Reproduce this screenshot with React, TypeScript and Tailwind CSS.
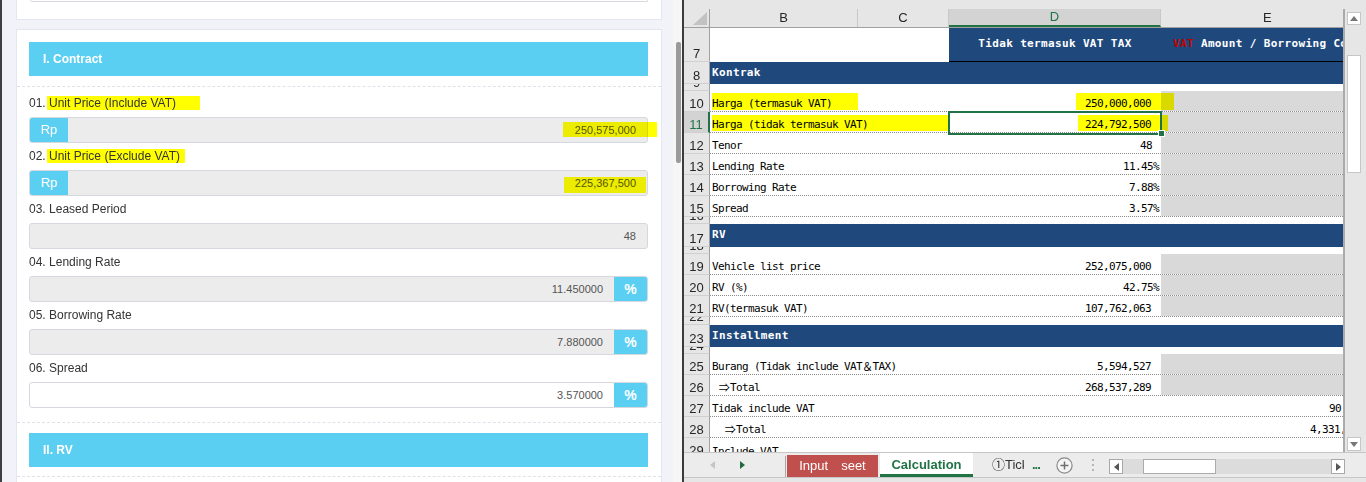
import React from "react";

const sans = "font-['Liberation_Sans',Arial,sans-serif]";
const mono = "font-['DejaVu_Sans_Mono','Noto_Sans_CJK_JP',monospace]";
const wide = "inline-block w-[12px] text-center font-['Noto_Sans_CJK_JP',sans-serif]";

interface FieldProps {
  no: string;
  label: string;
  labelHl?: string;
  value: string;
  prefix?: boolean;
  suffix?: boolean;
  editable?: boolean;
  valueHl?: string;
}

const Field: React.FC<FieldProps> = ({ no, label, labelHl, value, prefix, suffix, editable, valueHl }) => (
  <div>
    <div className="h-[16px] text-[12px] leading-[19px] text-[#333]">
      {no}{" "}
      {labelHl ? <span className={`-ml-[2px] bg-[#ffff00] pl-[2px] ${labelHl}`}>{label}</span> : label}
    </div>
    <div
      className={`relative mt-[7px] flex h-[26px] rounded-[3px] border border-[#d5d8df] ${
        editable ? "bg-white" : "bg-[#ececec]"
      }`}
    >
      {prefix && (
        <div className="flex w-[38px] items-center justify-center rounded-l-[2px] bg-[#5bcff2] text-[13px] text-white">
          Rp
        </div>
      )}
      <div className="flex flex-1 items-center justify-end pr-[11px] text-[11px] text-[#555]">{value}</div>
      {suffix && (
        <div className="flex w-[33px] items-center justify-center rounded-r-[2px] bg-[#5bcff2] text-[14px] font-bold text-white">
          %
        </div>
      )}
      {valueHl && <div className={`pointer-events-none absolute bg-[#ffff00] mix-blend-multiply ${valueHl}`} />}
    </div>
  </div>
);

const SectionHead: React.FC<{ title: string; pad: string }> = ({ title, pad }) => (
  <div className={`border-b border-dashed border-[#dfe2e8] px-[12px] pr-[13px] ${pad}`}>
    <div className="flex h-[34px] items-center bg-[#5bcff2] pl-[14px] text-[12px] font-bold text-white">{title}</div>
  </div>
);

const FormPanel: React.FC = () => (
  <div className={`flex h-[482px] w-[682px] shrink-0 border-l-2 border-[#3f3f3f] bg-[#f1f3f8] ${sans}`}>
    <div className="flex-1 overflow-hidden pl-[14px] pr-[11px]">
      <div className="h-[20px] border-x border-b border-[#e4e7ed] bg-white">
        <div className="mx-[13px] h-[2px] rounded-b-[3px] border-x border-b border-[#d5d8df]" />
      </div>
      <div className="mt-[9px] border border-[#e4e7ed] bg-white">
        <SectionHead title="I. Contract" pad="pt-[12px] pb-[10px]" />
        <div className="flex flex-col gap-[4px] border-b border-dashed border-[#dfe2e8] pb-[14px] pl-[12px] pr-[13px] pt-[7px]">
          <Field
            no="01."
            label="Unit Price (Include VAT)"
            labelHl="pr-[24px]"
            value="250,575,000"
            prefix
            valueHl="right-[-10px] top-[4px] h-[15px] w-[94px]"
          />
          <Field
            no="02."
            label="Unit Price (Exclude VAT)"
            labelHl="pr-[5px]"
            value="225,367,500"
            prefix
            valueHl="right-[1px] top-[6px] h-[16px] w-[82px]"
          />
          <Field no="03." label="Leased Period" value="48" />
          <Field no="04." label="Lending Rate" value="11.450000" suffix />
          <Field no="05." label="Borrowing Rate" value="7.880000" suffix />
          <Field no="06." label="Spread" value="3.570000" suffix editable />
        </div>
        <SectionHead title="II. RV" pad="pt-[10px] pb-[9px]" />
        <div className="h-[60px]" />
      </div>
    </div>
    <div className="w-[9px] shrink-0 bg-[#f6f6f6]">
      <div className="ml-[3px] mt-[42px] h-[121px] w-[5px] rounded-[2px] bg-[#9a9a9a]" />
    </div>
  </div>
);

interface XRow {
  n: number;
  h: string;
  navy?: string;
  b?: React.ReactNode;
  d?: string;
  dp?: string;
  e?: React.ReactNode;
  gray?: boolean;
  dot?: boolean;
  sel?: boolean;
  extra?: React.ReactNode;
}

const hl = "pointer-events-none absolute bg-[#ffff00] mix-blend-multiply";

const rows: XRow[] = [
  { n: 8, h: "h-[22px]", navy: "Kontrak" },
  { n: 9, h: "h-[7px]" },
  {
    n: 10,
    h: "h-[21px]",
    b: "Harga (termasuk VAT)",
    d: "250,000,000",
    dp: "pr-[10px]",
    gray: true,
    dot: true,
    extra: (
      <>
        <div className={`${hl} left-[28px] top-[2px] h-[17px] w-[146px]`} />
        <div className={`${hl} left-[392px] top-[2px] h-[17px] w-[98px]`} />
      </>
    ),
  },
  {
    n: 11,
    h: "h-[21px]",
    b: "Harga (tidak termasuk VAT)",
    d: "224,792,500",
    dp: "pr-[10px]",
    gray: true,
    dot: true,
    sel: true,
    extra: (
      <>
        <div className={`${hl} left-[28px] top-[3px] h-[16px] w-[236px]`} />
        <div className={`${hl} left-[394px] top-[3px] h-[16px] w-[90px]`} />
        <div className="pointer-events-none absolute left-[264px] top-[-1px] z-10 h-[24px] w-[214px] border-2 border-[#217346]" />
        <div className="pointer-events-none absolute left-[474px] top-[18px] z-10 h-[7px] w-[7px] border border-white bg-[#217346]" />
      </>
    ),
  },
  { n: 12, h: "h-[21px]", b: "Tenor", d: "48", dp: "pr-[9px]", gray: true, dot: true },
  { n: 13, h: "h-[21px]", b: "Lending Rate", d: "11.45%", dp: "pr-[2px]", gray: true, dot: true },
  { n: 14, h: "h-[21px]", b: "Borrowing Rate", d: "7.88%", dp: "pr-[2px]", gray: true, dot: true },
  { n: 15, h: "h-[21px]", b: "Spread", d: "3.57%", dp: "pr-[2px]", gray: true, dot: true },
  { n: 16, h: "h-[7px]" },
  { n: 17, h: "h-[23px]", navy: "RV" },
  { n: 18, h: "h-[7px]" },
  { n: 19, h: "h-[21px]", b: "Vehicle list price", d: "252,075,000", dp: "pr-[10px]", gray: true, dot: true },
  { n: 20, h: "h-[21px]", b: "RV (%)", d: "42.75%", dp: "pr-[2px]", gray: true, dot: true },
  { n: 21, h: "h-[21px]", b: "RV(termasuk VAT)", d: "107,762,063", dp: "pr-[10px]", gray: true, dot: true },
  { n: 22, h: "h-[8px]" },
  { n: 23, h: "h-[22px]", navy: "Installment" },
  { n: 24, h: "h-[7px]" },
  {
    n: 25,
    h: "h-[21px]",
    b: (
      <>
        Burang (Tidak include VAT<span className={wide}>＆</span>TAX)
      </>
    ),
    d: "5,594,527",
    dp: "pr-[10px]",
    gray: true,
    dot: true,
  },
  {
    n: 26,
    h: "h-[21px]",
    b: (
      <>
        {"\u00a0"}
        <span className={wide}>⇒</span>Total
      </>
    ),
    d: "268,537,289",
    dp: "pr-[10px]",
    gray: true,
    dot: true,
  },
  { n: 27, h: "h-[21px]", b: "Tidak include VAT", e: <span className="pl-[168px]">90,7</span>, dot: true },
  {
    n: 28,
    h: "h-[21px]",
    b: (
      <>
        {"\u00a0\u00a0"}
        <span className={wide}>⇒</span>Total
      </>
    ),
    e: <span className="pl-[149px]">4,331,</span>,
    dot: true,
  },
  { n: 29, h: "h-[21px]", b: "Include VAT" },
];

const RowHead: React.FC<{ n: number; sel?: boolean }> = ({ n, sel }) => (
  <div
    className={`flex w-[26px] shrink-0 items-end justify-center overflow-hidden border-b border-b-[#d0d0d0] text-[13px] leading-[15px] ${sans} ${
      sel ? "border-r-2 border-r-[#217346] bg-[#d3d3d3] text-[#217346]" : "border-r border-r-[#a0a0a0] bg-[#e6e6e6] text-[#262626]"
    }`}
  >
    <span>{n}</span>
  </div>
);

const XlRowView: React.FC<{ r: XRow }> = ({ r }) => (
  <div className={`relative flex shrink-0 ${r.h}`}>
    <RowHead n={r.n} sel={r.sel} />
    {r.navy ? (
      <div
        className={`flex flex-1 items-center bg-[#1f497d] pl-[2px] text-[11px] font-bold tracking-[0.35px] text-white ${mono}`}
      >
        {r.navy}
      </div>
    ) : (
      <div
        className={`flex flex-1 bg-white text-[11px] leading-[15px] tracking-[-0.62px] text-black ${mono} ${
          r.dot ? "border-b border-dotted border-b-[#8a8a8a]" : ""
        }`}
      >
        <div className="flex w-[148px] shrink-0 items-end whitespace-nowrap pl-[2px]">{r.b}</div>
        <div className="w-[91px] shrink-0" />
        <div className={`flex w-[212px] shrink-0 items-end justify-end ${r.dp ?? ""}`}>{r.d}</div>
        <div
          className={`flex w-[182px] shrink-0 items-end overflow-hidden whitespace-nowrap ${r.gray ? "bg-[#d9d9d9]" : ""}`}
        >
          {r.e}
        </div>
      </div>
    )}
    {r.extra}
  </div>
);

const ColHead: React.FC = () => (
  <div className={`flex h-[19px] shrink-0 border-b border-[#a0a0a0] bg-[#e6e6e6] text-[13px] text-[#262626] ${sans}`}>
    <div className="flex w-[26px] shrink-0 items-end justify-end border-r border-[#a0a0a0] pb-[2px] pr-[2px]">
      <svg width="14" height="13" viewBox="0 0 14 13">
        <polygon points="14,0 14,13 0,13" fill="#c2c2c2" />
      </svg>
    </div>
    <div className="flex w-[148px] shrink-0 items-center justify-center border-r border-[#c8c8c8]">B</div>
    <div className="flex w-[91px] shrink-0 items-center justify-center border-r border-[#c8c8c8]">C</div>
    <div className="flex w-[212px] shrink-0 items-center justify-center border-b-2 border-r border-b-[#217346] border-r-[#c8c8c8] bg-[#d3d3d3] text-[#217346]">
      D
    </div>
    <div className="flex w-[182px] shrink-0 items-center pl-[102px]">E</div>
  </div>
);

const Tri: React.FC<{ dir: "l" | "r" | "u" | "d"; color: string }> = ({ dir, color }) => {
  const pts = { l: "5,0 5,8 0,4", r: "0,0 0,8 5,4", u: "0,5 8,5 4,0", d: "0,0 8,0 4,5" }[dir];
  const w = dir === "l" || dir === "r" ? 5 : 8;
  const h = dir === "l" || dir === "r" ? 8 : 5;
  return (
    <svg width={w} height={h} viewBox={`0 0 ${w} ${h}`}>
      <polygon points={pts} fill={color} />
    </svg>
  );
};

const TabBar: React.FC = () => (
  <div className={`flex h-[25px] shrink-0 border-t border-[#c6c6c6] bg-[#ececec] text-[13px] ${sans}`}>
    <div className="flex w-[101px] shrink-0 items-center pl-[26px]">
      <Tri dir="l" color="#c4c4c4" />
      <div className="ml-[25px]">
        <Tri dir="r" color="#1e6b3f" />
      </div>
    </div>
    <div className="mt-[3px] w-px shrink-0 bg-[#a8a8a8]" />
    <div className="ml-[1px] mt-[2px] flex w-[91px] shrink-0 items-center justify-center bg-[#c0504d] text-white font-['Liberation_Sans','Noto_Sans_CJK_JP',sans-serif]">
      Input　seet
    </div>
    <div className="ml-[2px] flex w-[93px] shrink-0 items-center justify-center border-b-[3px] border-b-[#217346] bg-white pt-[2px] font-bold text-[#217346]">
      Calculation
    </div>
    <div className="flex w-[51px] shrink-0 items-center overflow-hidden whitespace-nowrap pl-[19px] text-[#333] font-['Liberation_Sans','Noto_Sans_CJK_JP',sans-serif]">
      ①Ticket
    </div>
    <div className="flex w-[22px] shrink-0 items-center pl-[8px] text-[13px] font-bold tracking-[-1px] text-[#217346]">
      ...
    </div>
    <div className="flex w-[36px] shrink-0 items-center justify-center">
      <svg width="17" height="17" viewBox="0 0 17 17">
        <circle cx="8.5" cy="8.5" r="7.6" fill="#f5f5f5" stroke="#8a8a8a" strokeWidth="1.2" />
        <path d="M8.5 4.5v8M4.5 8.5h8" stroke="#6f6f6f" strokeWidth="1.5" />
      </svg>
    </div>
    <div className="flex w-[22px] shrink-0 flex-col items-center justify-center gap-[3px]">
      <div className="h-[2px] w-[2px] bg-[#b5b5b5]" />
      <div className="h-[2px] w-[2px] bg-[#b5b5b5]" />
      <div className="h-[2px] w-[2px] bg-[#b5b5b5]" />
    </div>
    <div className="ml-[5px] mt-[6px] flex h-[15px] w-[236px] shrink-0">
      <div className="flex w-[14px] items-center justify-center border border-[#a8a8a8] bg-white">
        <Tri dir="l" color="#555" />
      </div>
      <div className="flex-1 bg-[#dcdcdc]">
        <div className="ml-[20px] h-full w-[73px] border border-[#ababab] bg-white" />
      </div>
      <div className="flex w-[14px] items-center justify-center border border-[#a8a8a8] bg-white">
        <Tri dir="r" color="#555" />
      </div>
    </div>
  </div>
);

const Sheet: React.FC = () => (
  <div className="flex h-[482px] w-[682px] shrink-0 flex-col overflow-hidden bg-[#e6e6e6]">
    <div className="h-[9px] shrink-0" />
    <div className="flex h-[443px] shrink-0">
      <div className="flex w-[659px] shrink-0 flex-col overflow-hidden">
        <ColHead />
        <div className="flex h-[424px] flex-col overflow-hidden">
          <div className="relative flex h-[34px] shrink-0">
            <RowHead n={7} />
            <div className="w-[239px] shrink-0 bg-white" />
            <div className={`flex w-[394px] shrink-0 border-b border-black bg-[#1f497d] text-[11px] font-bold tracking-[0.35px] text-white ${mono}`}>
              <div className="flex w-[212px] shrink-0 items-center justify-center">Tidak termasuk VAT TAX</div>
              <div className="flex w-[182px] shrink-0 items-center overflow-hidden whitespace-nowrap pl-[12px]">
                <span className="text-[#c00000]">VAT</span>
                {"\u00a0"}Amount / Borrowing Cost
              </div>
            </div>
          </div>
          {rows.map((r) => (
            <XlRowView key={r.n} r={r} />
          ))}
        </div>
      </div>
      <div className="flex w-[23px] shrink-0 flex-col border-l-2 border-[#ababab] bg-[#e6e6e6] pl-[2px]">
        <div className="mt-[3px] flex h-[13px] w-[14px] items-center justify-center border border-[#c6c6c6] bg-white">
          <Tri dir="u" color="#777" />
        </div>
        <div className="mt-[30px] h-[118px] w-[14px] border border-[#c6c6c6] bg-white" />
        <div className="mb-[1px] mt-auto flex h-[14px] w-[14px] items-center justify-center border border-[#c6c6c6] bg-white">
          <Tri dir="d" color="#777" />
        </div>
      </div>
    </div>
    <TabBar />
    <div className="h-[5px] shrink-0 border-t border-[#c6c6c6] bg-[#e6e6e6]" />
  </div>
);

export default function App() {
  return (
    <div className="flex h-[482px] w-[1366px] overflow-hidden bg-white">
      <FormPanel />
      <div className="w-[2px] shrink-0 bg-[#3b3b3b]" />
      <Sheet />
    </div>
  );
}
